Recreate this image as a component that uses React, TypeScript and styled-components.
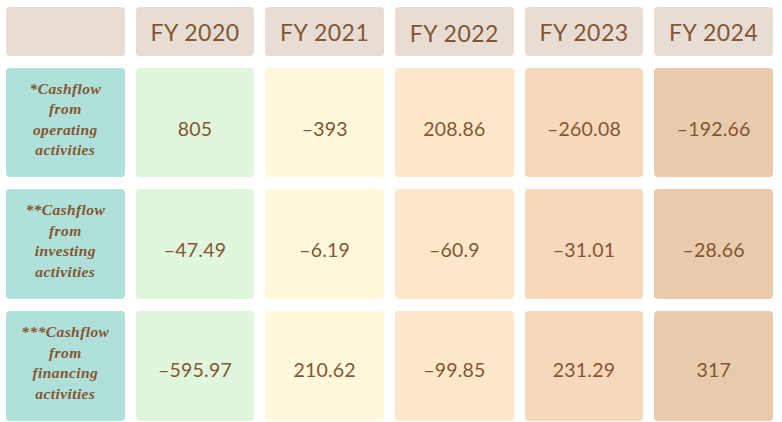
import styled, { createGlobalStyle } from "styled-components";

const GlobalStyle = createGlobalStyle`
  html, body {
    margin: 0;
    padding: 0;
    background: #ffffff;
  }
  body {
    font-family: "Lato", "Liberation Sans", sans-serif;
  }
`;

const years = ["FY 2020", "FY 2021", "FY 2022", "FY 2023", "FY 2024"];

// one colour per year column
const columnColors = ["#e1f7dd", "#fff8dc", "#ffe7c9", "#f7d8bb", "#e8caad"];

const rows = [
  {
    label: ["*Cashflow", "from", "operating", "activities"],
    values: ["805", "-393", "208.86", "-260.08", "-192.66"],
    shift: 12,
  },
  {
    label: ["**Cashflow", "from", "investing", "activities"],
    values: ["-47.49", "-6.19", "-60.9", "-31.01", "-28.66"],
    shift: 10,
  },
  {
    label: ["***Cashflow", "from", "financing", "activities"],
    values: ["-595.97", "210.62", "-99.85", "231.29", "317"],
    shift: 6,
  },
];

const App = () => {
  return (
    <>
      <GlobalStyle />
      <Table>
        <HeaderCell />
        {years.map((year) => (
          <HeaderCell key={year} $drop={year === "FY 2022" ? 3 : -2}>
            {year}
          </HeaderCell>
        ))}

        {rows.map((row) => (
          <Row key={row.label[0]}>
            <LabelCell>
              {row.label.map((line) => (
                <LabelLine key={line}>{line}</LabelLine>
              ))}
            </LabelCell>
            {row.values.map((value, i) => (
              <ValueCell key={i} $bg={columnColors[i]} $shift={row.shift}>
                {value.replace("-", "\u2013")}
              </ValueCell>
            ))}
          </Row>
        ))}
      </Table>
    </>
  );
};

const Table = styled.div`
  display: grid;
  grid-template-columns: repeat(6, 1fr);
  grid-template-rows: 49px 109px 110px 110px;
  column-gap: 11px;
  row-gap: 12px;
  padding: 7px 9px 0px 6px;
  width: 782px;
  box-sizing: border-box;
`;

const Row = styled.div`
  display: contents;
`;

const Cell = styled.div`
  display: flex;
  align-items: center;
  justify-content: center;
  border-radius: 4px;
  color: #835631;
  box-sizing: border-box;
`;

const HeaderCell = styled(Cell)<{ $drop?: number }>`
  background-color: #e8ddd5;
  font-size: 23px;
  letter-spacing: 0.5px;
  padding-top: ${(p) => p.$drop ?? 0}px;
`;

const LabelCell = styled(Cell)`
  flex-direction: column;
  background-color: #b0e0da;
  font-family: "Liberation Serif", "DejaVu Serif", serif;
  font-style: italic;
  font-weight: 700;
  font-size: 15.5px;
  padding-bottom: 6px;
`;

const LabelLine = styled.div`
  line-height: 20.5px;
  letter-spacing: 0.4px;
`;

const ValueCell = styled(Cell)<{ $bg: string; $shift: number }>`
  background-color: ${(p) => p.$bg};
  font-size: 19.5px;
  letter-spacing: 0.2px;
  padding-top: ${(p) => p.$shift}px;
`;

export default App;
